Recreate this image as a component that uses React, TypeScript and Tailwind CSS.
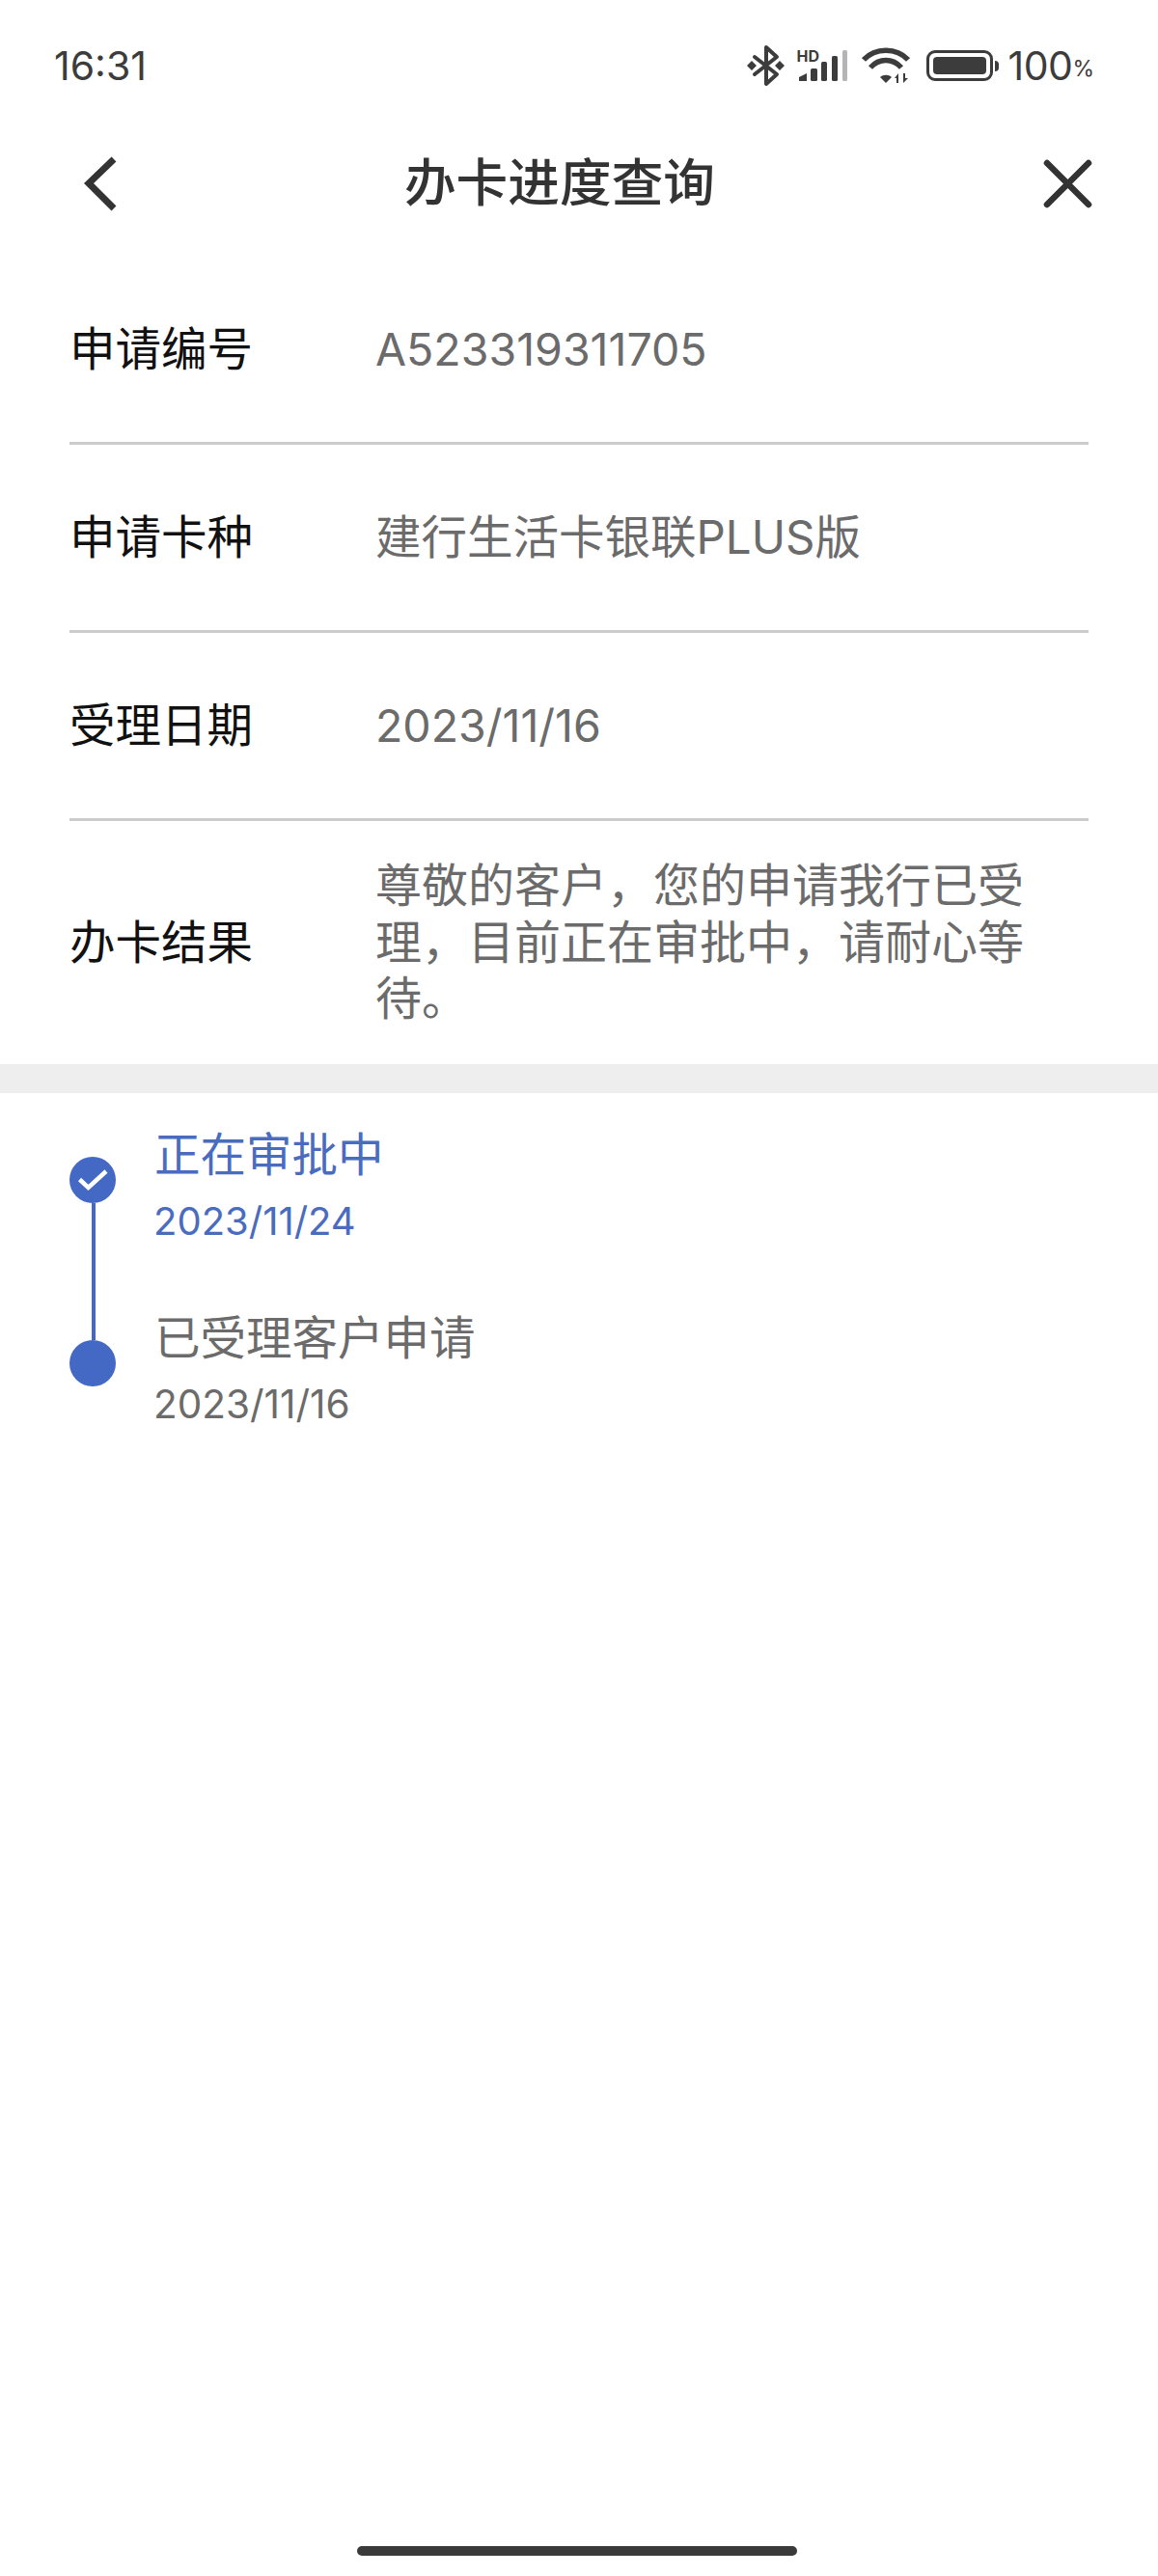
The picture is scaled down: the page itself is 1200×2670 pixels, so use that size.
const font = { fontFamily: '"Inter", "Noto Sans CJK SC", sans-serif' };

const rows = [
    { label: "申请编号", value: "A523319311705", valueClass: "text-[46.5px]" },
    { label: "申请卡种", value: "建行生活卡银联PLUS版", valueClass: "text-[47.5px]" },
    { label: "受理日期", value: "2023/11/16", valueClass: "text-[46.5px]" },
];

function StatusIcons() {
    return (
        <div className="flex items-center text-[#3c3c3c]">
            <svg width="40" height="44" viewBox="0 0 40 44" className="mr-[11px]">
                <path d="M8 13 L31 31 L20 41 V3 L31 13 L8 31" fill="none" stroke="currentColor" strokeWidth="4" strokeLinejoin="round" strokeLinecap="round" />
                <path d="M0 22 L5 17 L10 22 L5 27 Z M29 22 L34 17 L39 22 L34 27 Z" fill="currentColor" />
            </svg>
            <div className="relative mr-[14px] h-[34px] w-[54px]">
                <svg width="54" height="34" viewBox="0 0 54 34">
                    <path d="M3 33 V29 L11 25 V33 Z" fill="currentColor" />
                    <rect x="15" y="20" width="7" height="13" rx="1.5" fill="currentColor" />
                    <rect x="26" y="13" width="6" height="20" rx="1.5" fill="currentColor" />
                    <rect x="37" y="7" width="6" height="26" rx="1.5" fill="currentColor" />
                    <rect x="48" y="1" width="5" height="32" rx="1.5" fill="#b5b5b5" />
                </svg>
                <span className="absolute left-0 top-0 text-[16px] font-bold leading-[14px]">HD</span>
            </div>
            <svg width="50" height="38" viewBox="0 0 50 38" className="mr-[17px]">
                <path d="M2 13 C14 0 36 0 48 13" fill="none" stroke="currentColor" strokeWidth="5.5" />
                <path d="M9 21 C18 11 32 11 41 21" fill="none" stroke="currentColor" strokeWidth="5.5" />
                <path d="M19 31 C22 28 28 28 31 31 L25 37 Z" fill="currentColor" />
                <path d="M36 37 V32 H34 L38 27 V37 Z M43 27 V37 L48 32 H45 V27 Z" fill="currentColor" />
            </svg>
            <div className="mr-[9px] flex items-center">
                <div className="flex h-[32px] w-[69px] items-center rounded-[9px] border-[3px] border-[#3c3c3c] p-[4px]">
                    <div className="h-full w-full rounded-[4px] bg-[#3c3c3c]" />
                </div>
                <div className="ml-[2px] h-[11px] w-[4px] rounded-r-sm bg-[#3c3c3c]" />
            </div>
            <span className="text-[41px] leading-none tracking-[-0.5px]">100</span>
            <span className="mt-[7px] text-[23px] leading-none">%</span>
        </div>
    );
}

function Row({ label, value, valueClass }: { label: string; value: string; valueClass: string }) {
    return (
        <div className="flex h-[195px] items-center border-b-[3px] border-[#cccccc]">
            <div className="w-[317px] text-[47.5px] leading-none text-[#111111]">{label}</div>
            <div className={`${valueClass} leading-none text-[#6b6b6b]`}>{value}</div>
        </div>
    );
}

export default function App() {
    return (
        <div className="flex h-[2670px] w-[1200px] flex-col overflow-hidden bg-white" style={font}>
            <div className="flex h-[134px] items-center justify-between pl-[56px] pr-[66px] pt-[2px]">
                <span className="text-[41px] leading-none text-[#3c3c3c]">16:31</span>
                <StatusIcons />
            </div>

            <div className="relative flex h-[132px] items-start justify-center pt-[29px]">
                <svg width="40" height="62" viewBox="0 0 40 62" className="absolute left-[84px] top-[26px]">
                    <path d="M34 5 L8 30 L34 56" fill="none" stroke="#333333" strokeWidth="7" />
                </svg>
                <span className="mr-[40px] text-[53.7px] font-medium leading-none text-[#333333]">办卡进度查询</span>
                <svg width="52" height="52" viewBox="0 0 52 52" className="absolute left-[1081px] top-[31px]">
                    <path d="M4 4 L47 47 M47 4 L4 47" fill="none" stroke="#333333" strokeWidth="6.5" strokeLinecap="round" />
                </svg>
            </div>

            <div className="px-[72px]">
                <div className="w-[1056px]">
                    {rows.map((row) => (
                        <Row key={row.label} label={row.label} value={row.value} valueClass={row.valueClass} />
                    ))}
                    <div className="flex h-[252px] items-center">
                        <div className="w-[317px] text-[47.5px] leading-none text-[#111111]">办卡结果</div>
                        <div className="w-[680px] text-[48px] leading-[58.5px] text-[#6b6b6b]">
                            尊敬的客户，您的申请我行已受理，目前正在审批中，请耐心等待。
                        </div>
                    </div>
                </div>
            </div>

            <div className="h-[30px] bg-[#eeeeee]" />

            <div className="flex pl-[72px] pt-[66px]">
                <div className="flex w-[48px] flex-col items-center">
                    <div className="h-[48px] w-[48px] rounded-full bg-[#4469c4]">
                        <svg width="48" height="48" viewBox="0 0 48 48">
                            <path d="M10.5 23.5 L19.5 32 L38 15" fill="none" stroke="#ffffff" strokeWidth="4.5" />
                        </svg>
                    </div>
                    <div className="ml-[2px] h-[142px] w-[4px] bg-[#4469c4]" />
                    <div className="h-[48px] w-[48px] rounded-full bg-[#4469c4]" />
                </div>
                <div className="ml-[40px] -mt-[44px]">
                    <div className="h-[190px] pt-[12px]">
                        <div className="text-[47.5px] leading-[60px] text-[#4a6cbf]">正在审批中</div>
                        <div className="mt-[11px] -ml-[1px] text-[40px] leading-[56px] text-[#4a6cbf]">2023/11/24</div>
                    </div>
                    <div className="pt-[12px]">
                        <div className="text-[47.5px] leading-[60px] text-[#6b6b6b]">已受理客户申请</div>
                        <div className="mt-[11px] -ml-[1px] text-[40.5px] leading-[56px] text-[#6b6b6b]">2023/11/16</div>
                    </div>
                </div>
            </div>

            <div className="mt-auto mb-[21px] ml-[370px] h-[10px] w-[456px] rounded-full bg-[#3a3a3a]" />
        </div>
    );
}
